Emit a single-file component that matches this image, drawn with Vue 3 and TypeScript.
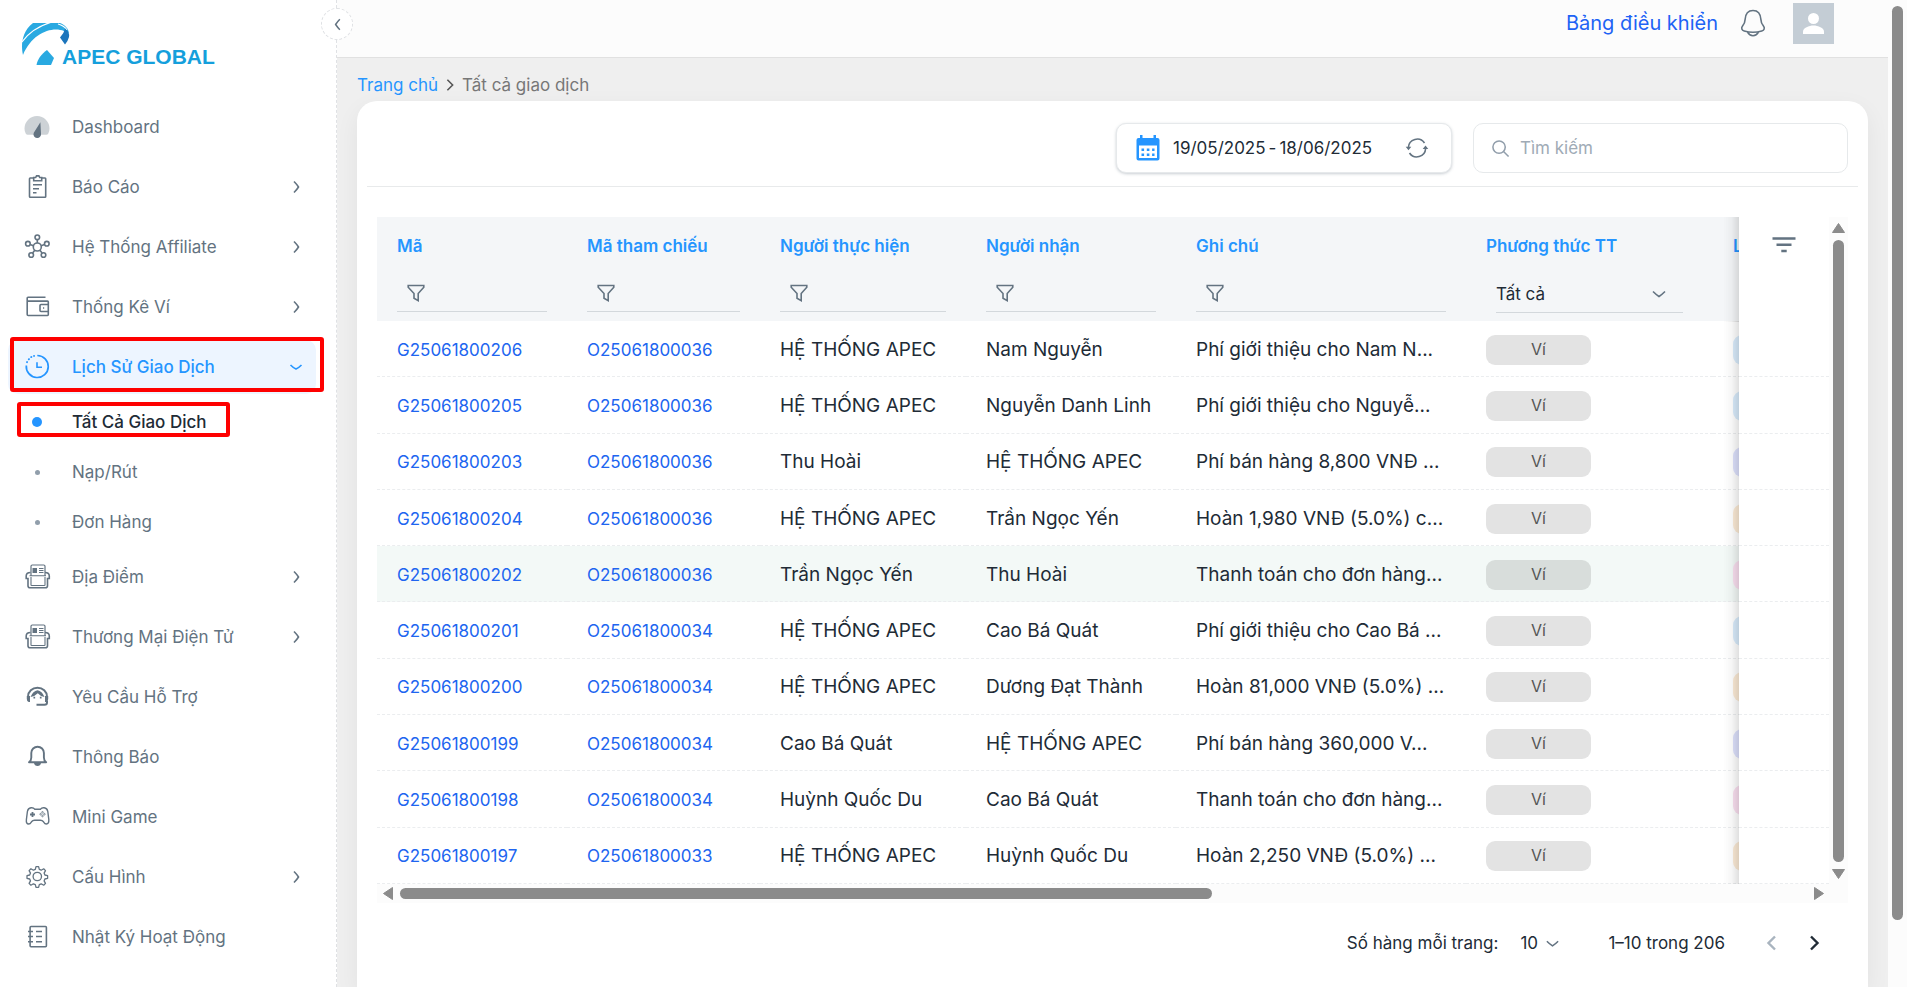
<script setup lang="ts">
import { ref } from 'vue'

interface SubItem {
  label: string
  active?: boolean
}

interface NavItem {
  label: string
  icon: string
  expandable?: boolean
  active?: boolean
  children?: SubItem[]
}

interface Row {
  code: string
  refCode: string
  from: string
  to: string
  note: string
  tone: 'blue' | 'violet' | 'orange' | 'pink'
}

const navItems: NavItem[] = [
  { label: 'Dashboard', icon: 'gauge' },
  { label: 'Báo Cáo', icon: 'clipboard', expandable: true },
  { label: 'Hệ Thống Affiliate', icon: 'hub', expandable: true },
  { label: 'Thống Kê Ví', icon: 'wallet', expandable: true },
  {
    label: 'Lịch Sử Giao Dịch',
    icon: 'history',
    expandable: true,
    active: true,
    children: [
      { label: 'Tất Cả Giao Dịch', active: true },
      { label: 'Nạp/Rút' },
      { label: 'Đơn Hàng' },
    ],
  },
  { label: 'Địa Điểm', icon: 'kiosk', expandable: true },
  { label: 'Thương Mại Điện Tử', icon: 'kiosk', expandable: true },
  { label: 'Yêu Cầu Hỗ Trợ', icon: 'support' },
  { label: 'Thông Báo', icon: 'bell' },
  { label: 'Mini Game', icon: 'gamepad' },
  { label: 'Cấu Hình', icon: 'gear', expandable: true },
  { label: 'Nhật Ký Hoạt Động', icon: 'notebook' },
]

const filterColumns = ['Mã', 'Mã tham chiếu', 'Người thực hiện', 'Người nhận', 'Ghi chú']

const rows: Row[] = [
  { code: 'G25061800206', refCode: 'O25061800036', from: 'HỆ THỐNG APEC', to: 'Nam Nguyễn', note: 'Phí giới thiệu cho Nam N...', tone: 'blue' },
  { code: 'G25061800205', refCode: 'O25061800036', from: 'HỆ THỐNG APEC', to: 'Nguyễn Danh Linh', note: 'Phí giới thiệu cho Nguyễ...', tone: 'blue' },
  { code: 'G25061800203', refCode: 'O25061800036', from: 'Thu Hoài', to: 'HỆ THỐNG APEC', note: 'Phí bán hàng 8,800 VNĐ ...', tone: 'violet' },
  { code: 'G25061800204', refCode: 'O25061800036', from: 'HỆ THỐNG APEC', to: 'Trần Ngọc Yến', note: 'Hoàn 1,980 VNĐ (5.0%) c...', tone: 'orange' },
  { code: 'G25061800202', refCode: 'O25061800036', from: 'Trần Ngọc Yến', to: 'Thu Hoài', note: 'Thanh toán cho đơn hàng...', tone: 'pink' },
  { code: 'G25061800201', refCode: 'O25061800034', from: 'HỆ THỐNG APEC', to: 'Cao Bá Quát', note: 'Phí giới thiệu cho Cao Bá ...', tone: 'blue' },
  { code: 'G25061800200', refCode: 'O25061800034', from: 'HỆ THỐNG APEC', to: 'Dương Đạt Thành', note: 'Hoàn 81,000 VNĐ (5.0%) ...', tone: 'orange' },
  { code: 'G25061800199', refCode: 'O25061800034', from: 'Cao Bá Quát', to: 'HỆ THỐNG APEC', note: 'Phí bán hàng 360,000 V...', tone: 'violet' },
  { code: 'G25061800198', refCode: 'O25061800034', from: 'Huỳnh Quốc Du', to: 'Cao Bá Quát', note: 'Thanh toán cho đơn hàng...', tone: 'pink' },
  { code: 'G25061800197', refCode: 'O25061800033', from: 'HỆ THỐNG APEC', to: 'Huỳnh Quốc Du', note: 'Hoàn 2,250 VNĐ (5.0%) ...', tone: 'orange' },
]

const highlighted = ref('G25061800202')
const search = ref('')
const method = ref('all')
const pageSize = ref('10')
</script>

<template>
  <div class="layout">
    <aside class="sidebar">
      <a class="logo" href="#">
        <svg class="logo-mark" viewBox="0 0 50 42" aria-hidden="true">
          <path d="M1 32C-1 24-1 9 11 0h27c5 2 8 5 9 10l-5-2C30 3 10 10 1 32z" fill="#29a9e1" />
          <path d="M0 19C7 9 16 3 30-1M36 1C40 2 43 4 45 7" stroke="#fff" stroke-width="1.200" fill="none" />
          <path d="M43 5.500q5 4 4 8.500-1 4-4 7.500l-5-7q4-4 5-9z" fill="#1c75bc" />
          <path d="M25 27l7 8-3 7H14.500c1-6 5-11 10.500-15z" fill="#29a9e1" />
        </svg>
        <span class="logo-text">APEC GLOBAL</span>
      </a>

      <nav class="nav" aria-label="Menu">
        <div v-for="item in navItems" :key="item.label" class="nav-group">
          <component
            :is="item.expandable ? 'button' : 'a'"
            class="nav-item"
            :class="{ active: item.active }"
            :type="item.expandable ? 'button' : undefined"
            :href="item.expandable ? undefined : '#'"
          >
            <svg class="nav-icon" viewBox="0 0 28 28" aria-hidden="true">
              <template v-if="item.icon === 'gauge'">
                <path d="M1.500 15.500a12.500 12.500 0 0 1 25 0q0 3-1.200 5-.7 1.300-2 1.300H4.700q-1.300 0-2-1.300-1.200-2-1.200-5z" fill="currentColor" stroke="none" opacity=".32" />
                <path d="M17.400 9.200L18 20.500a3.800 3.800 0 1 1-7.200-.8z" fill="currentColor" stroke="none" />
              </template>
              <template v-else-if="item.icon === 'clipboard'">
                <path d="M10.500 5H7.200Q6.500 5 6.500 5.700V23.500q0 .8.700.8H22q.7 0 .7-.8V5.700q0-.7-.7-.7h-3.300" />
                <path d="M10.700 7.800V4.500h2l.8-1.600h2.400l.8 1.600h2v3.300z" />
                <path d="M10 11.700h9M10 15.700h6M10 19.700h3.500" />
              </template>
              <template v-else-if="item.icon === 'hub'">
                <circle cx="14.300" cy="14" r="4" />
                <circle cx="14.300" cy="4.300" r="2.300" />
                <circle cx="4.900" cy="10.700" r="2.300" />
                <circle cx="23.800" cy="10.700" r="2.300" />
                <circle cx="8.200" cy="22" r="2.300" />
                <circle cx="20.500" cy="22" r="2.300" />
                <path d="M14.300 6.800V10M7.200 11.600l3.200 1.100M21.500 11.600l-3.300 1.100M9.600 20l2.200-2.800M19.100 20l-2.200-2.800" />
              </template>
              <template v-else-if="item.icon === 'wallet'">
                <path d="M22.500 4.200H5q-.8 0-.8.800v16.500q0 1 1 1H24.500q.8 0 .8-.9V9q0-.9-.8-.9H4.500" />
                <path d="M25.300 11.500H18q-1 0-1 1v5q0 1 1 1h7.300M20 15h1.200" />
              </template>
              <template v-else-if="item.icon === 'history'">
                <path d="M14.300 2.500A11 11 0 1 1 3.300 12.500" stroke-width="1.700" />
                <path d="M4 9.200l.1-.2M5.800 6.300l.2-.2M8.200 4.100l.2-.1M11 2.900h.1" stroke-width="1.900" stroke-linecap="round" />
                <path d="M14 9.300v5h5" />
              </template>
              <template v-else-if="item.icon === 'kiosk'">
                <path d="M8 13V3.300Q8 2 9.300 2h11.400Q22 2 22 3.300V13" stroke-width="1.200" />
                <path d="M9.500 5h4.500v5H9.500z" fill="currentColor" stroke="none" />
                <path d="M16 5.500h4.500M16 7.500h4.500M16 9.500h4.500M6.500 12.800h16.500" stroke-width="1.100" />
                <path d="M7.500 9.500Q3.200 9.500 3.200 13v2.500h1.800v7.200q0 2 2 2h15.500q2 0 2-2v-7.200h1.800V13q0-3.500-4.300-3.500" />
                <path d="M8 14v8q0 .5.700.5h12.600q.7 0 .7-.5V14" stroke-width="1.100" />
              </template>
              <template v-else-if="item.icon === 'support'">
                <path d="M5 14.500v-.8a9.500 9 0 0 1 19 0v.8" stroke-width="2" />
                <path d="M3.800 13h3.200v6H5.700q-1.900-.5-1.900-3zM25.200 13h-3.200v6h1.300q1.900-.5 1.900-3z" fill="currentColor" stroke="none" />
                <path d="M7.500 14q2.500-6 7-6.700 4.500.7 7 6.700-4.500-1-6.700-3.800-2.500 2.800-7.300 3.800z" fill="currentColor" stroke="none" />
                <path d="M11.300 13.700v1.800M17.700 13.700v1.800" stroke-width="1.700" />
                <path d="M24 18v1.500q0 2.200-2.500 2.200H13.500" stroke-width="2" />
              </template>
              <template v-else-if="item.icon === 'bell'">
                <path d="M6 19.200q2.300-1.500 2.300-4.700v-4.500a6.300 6.300 0 0 1 12.600 0v4.500q0 3.200 2.300 4.700z" stroke-width="1.900" stroke-linejoin="round" />
                <path d="M11 20q.5 3 3.500 3t3.500-3z" fill="currentColor" stroke="none" />
              </template>
              <template v-else-if="item.icon === 'gamepad'">
                <path d="M8 4.800q2.500-.3 3.700 1.400h5.800q1.200-1.700 3.700-1.400 3 .3 3.600 3.700l1 8q.3 4.500-2.500 4.500-1.400 0-2.800-2.200-1.200-1.500-3-1.500h-6q-1.800 0-3 1.500-1.400 2.200-2.800 2.200-2.800 0-2.300-4.500l1-8Q5 5.100 8 4.800z" stroke-width="1.400" />
                <path d="M9.500 9v5M7 11.500h5" stroke-width="1.800" />
                <circle cx="19.500" cy="9.300" r=".8" stroke-width=".8" /><circle cx="19.500" cy="13" r=".8" stroke-width=".8" /><circle cx="17.600" cy="11.200" r=".8" stroke-width=".8" /><circle cx="21.400" cy="11.200" r=".8" stroke-width=".8" />
              </template>
              <template v-else-if="item.icon === 'gear'">
                <circle cx="14.300" cy="13.500" r="4.200" stroke-width="1.300" />
                <path d="M13 3.700h2.600l.7 2.700 1.900.8 2.500-1.400 1.800 1.800-1.400 2.500.8 1.900 2.700.7v2.600l-2.700.7-.8 1.900 1.400 2.500-1.800 1.800-2.500-1.400-1.900.8-.7 2.700H13l-.7-2.700-1.900-.8-2.500 1.400-1.800-1.800 1.400-2.500-.8-1.900-2.700-.7v-2.600l2.700-.7.8-1.900-1.400-2.500 1.800-1.800 2.500 1.400 1.900-.8z" stroke-width="1.300" stroke-linejoin="round" />
              </template>
              <template v-else>
                <path d="M8 3.500h14.500q.9 0 .9.900v18.400q0 .9-.9.900H8q-.9 0-.9-.9V4.400q0-.9.900-.9z" />
                <path d="M5 8.500h5M5 13.500h5M5 18.800h5M13 8.500h6M13 13.500h6M13 18.800h6" />
              </template>
            </svg>
            <span class="nav-label">{{ item.label }}</span>
            <svg v-if="item.expandable" class="nav-chevron" viewBox="0 0 16 16" aria-hidden="true">
              <path :d="item.children ? 'M2.500 6Q5.500 9 8 10Q10.500 9 13.500 6' : 'M6 2.500Q9 5.500 10.500 8Q9 10.500 6 13.500'" />
            </svg>
          </component>
          <span v-if="item.active" class="mark mark-parent" aria-hidden="true"></span>

          <ul v-if="item.children" class="sub">
            <li v-for="child in item.children" :key="child.label" class="sub-row">
              <a class="sub-item" :class="{ current: child.active }" href="#">
                <span class="dot-cell"><span class="dot"></span></span>
                <span>{{ child.label }}</span>
              </a>
              <span v-if="child.active" class="mark mark-child" aria-hidden="true"></span>
            </li>
          </ul>
        </div>
      </nav>

      <button class="collapse" type="button" aria-label="Thu gọn menu">
        <svg viewBox="0 0 16 16" aria-hidden="true"><path d="M10.500 2.500Q8 5 6 8Q8 11 10.500 13.500" /></svg>
      </button>
    </aside>

    <div class="main">
      <header class="topbar">
        <a class="topbar-link" href="#">Bảng điều khiển</a>
        <button class="icon-button" type="button" aria-label="Thông báo">
          <svg class="top-bell" viewBox="0 0 28 28" aria-hidden="true">
            <path d="M14 1.500c-5 0-7.600 4-7.900 9-.1 3-1 4.600-2.400 6.300-1.900 2.300-.9 4.500 1.500 5.200 5.500 1.500 12.100 1.500 17.600 0 2.400-.7 3.400-2.900 1.500-5.200-1.400-1.700-2.300-3.300-2.400-6.300-.3-5-2.900-9-7.900-9z" />
            <path d="M8.500 23.200q2 3.500 5.500 3.500t5.500-3.500" />
          </svg>
        </button>
        <button class="avatar" type="button" aria-label="Tài khoản">
          <svg viewBox="0 0 41 41" aria-hidden="true">
            <circle cx="20.500" cy="15.500" r="5.500" />
            <path d="M10 31v-2.500c0-3.500 6-6 10.500-6s10.500 2.500 10.500 6V31z" />
          </svg>
        </button>
      </header>

      <div class="breadcrumb">
        <a href="#">Trang chủ</a>
        <svg viewBox="0 0 16 16" aria-hidden="true"><path d="M5 2L11 8l-6 6" /></svg>
        <span>Tất cả giao dịch</span>
      </div>

      <section class="card">
        <div class="toolbar">
          <div class="date-range">
            <svg class="calendar" viewBox="0 0 24 26" aria-hidden="true">
              <path d="M4 0h2.500v3h11V0H20v3h1.500Q23.500 3 23.500 5v18.500q0 2-2 2h-19q-2 0-2-2V5q0-2 2-2H4z" fill="#2595ff" />
              <path d="M3 10.500h18V23H3z" fill="#fff" />
              <path d="M5.500 14.700h13M5.500 19.700h13" stroke="#2595ff" stroke-width="2.600" stroke-dasharray="2.600 2.700" />
            </svg>
            <button class="date-value" type="button"><span>19/05/2025</span><span>-</span><span>18/06/2025</span></button>
            <button class="icon-button" type="button" aria-label="Làm mới">
              <svg class="refresh" viewBox="0 0 24 24" aria-hidden="true">
                <path d="M3.400 11.500A8.800 8.800 0 0 1 19.500 7M20.600 12.500A8.800 8.800 0 0 1 4.500 17" />
                <path d="M.7 10.800h5.600l-2.800 3.400zM17.700 13h5.600l-2.800-3.400z" fill="#637381" stroke="none" />
              </svg>
            </button>
          </div>
          <label class="search">
            <svg viewBox="0 0 20 20" aria-hidden="true"><circle cx="8.500" cy="8.500" r="6.500" /><path d="M13.200 13.200L18.500 18.500" /></svg>
            <input v-model="search" type="text" placeholder="Tìm kiếm" aria-label="Tìm kiếm" />
          </label>
        </div>

        <div class="table-area">
          <div class="viewport">
            <table>
              <colgroup>
                <col class="c-code" /><col class="c-ref" /><col class="c-from" /><col class="c-to" /><col class="c-note" /><col class="c-method" /><col class="c-type" /><col class="c-action" />
              </colgroup>
              <thead>
                <tr>
                  <th v-for="name in filterColumns" :key="name" scope="col">
                    <div class="th-title">{{ name }}</div>
                    <div class="filter">
                      <button class="icon-button" type="button" :aria-label="'Lọc ' + name">
                        <svg viewBox="0 0 20 20" aria-hidden="true"><path d="M2.200 2.500h15.600v1.800l-5.600 6.200v7.200l-4.200-2.400v-4.800L2.200 4.300z" /></svg>
                      </button>
                      <input type="text" :aria-label="name" />
                    </div>
                  </th>
                  <th scope="col">
                    <div class="th-title">Phương thức TT</div>
                    <div class="select-field">
                      <select v-model="method" aria-label="Phương thức TT">
                        <option value="all">Tất cả</option>
                        <option value="wallet">Ví</option>
                      </select>
                      <svg viewBox="0 0 16 16" aria-hidden="true"><path d="M2 5.500Q5 8.500 8 10.500Q11 8.500 14 5.500" /></svg>
                    </div>
                  </th>
                  <th scope="col"><div class="th-title">Loại</div></th>
                  <th class="sticky" scope="col">
                    <button class="icon-button" type="button" aria-label="Bộ lọc">
                      <svg class="filter-lines" viewBox="0 0 24 18" aria-hidden="true"><path d="M.5 2.500h23M4.500 8.800h15M9.300 15h5.400" /></svg>
                    </button>
                  </th>
                </tr>
              </thead>
              <tbody>
                <tr v-for="row in rows" :key="row.code" :class="{ hovered: row.code === highlighted }">
                  <td><a class="code" href="#">{{ row.code }}</a></td>
                  <td><a class="code" href="#">{{ row.refCode }}</a></td>
                  <td>{{ row.from }}</td>
                  <td>{{ row.to }}</td>
                  <td>{{ row.note }}</td>
                  <td><span class="chip">Ví</span></td>
                  <td><span class="type-chip" :class="row.tone"></span></td>
                  <td class="sticky"></td>
                </tr>
              </tbody>
            </table>
          </div>
          <div class="vbar" aria-hidden="true">
            <svg viewBox="0 0 13 10"><path d="M6.500.5L12.500 9.500H.5z" /></svg>
            <span class="vthumb"></span>
            <svg viewBox="0 0 13 10"><path d="M6.500 9.500L12.500.5H.5z" /></svg>
          </div>
          <div class="hbar" aria-hidden="true">
            <svg viewBox="0 0 10 13"><path d="M.5 6.500L9.500.5v12z" /></svg>
            <span class="htrack"><span class="hthumb"></span></span>
            <svg viewBox="0 0 10 13"><path d="M9.500 6.500L.5.500v12z" /></svg>
          </div>
        </div>

        <footer class="pager">
          <label for="page-size">Số hàng mỗi trang:</label>
          <div class="page-size">
            <select id="page-size" v-model="pageSize">
              <option>10</option>
              <option>25</option>
            </select>
            <svg viewBox="0 0 16 16" aria-hidden="true"><path d="M2 5.500Q5 8.500 8 10.500Q11 8.500 14 5.500" /></svg>
          </div>
          <span class="range">1–10 trong 206</span>
          <button class="page-button" type="button" disabled aria-label="Trang trước">
            <svg viewBox="0 0 20 20" aria-hidden="true"><path d="M13 3.500L6.500 10l6.500 6.500" /></svg>
          </button>
          <button class="page-button" type="button" aria-label="Trang sau">
            <svg viewBox="0 0 20 20" aria-hidden="true"><path d="M7 3.500l6.500 6.500L7 16.500" /></svg>
          </button>
        </footer>
      </section>
    </div>

    <div class="page-bar" aria-hidden="true"><span class="page-thumb"></span></div>
  </div>
</template>

<style>
body {
  margin: 0;
  background: #efefef;
}
</style>

<style scoped>
.layout {
  display: flex;
  height: 100vh;
  overflow: hidden;
  font-family: Inter, 'Liberation Sans', sans-serif;
  font-size: 17px;
  line-height: 26px;
  color: #212b36;
}

.layout *,
.layout *::before {
  box-sizing: border-box;
}

button,
input,
select {
  font: inherit;
  color: inherit;
  background: none;
  border: 0;
  padding: 0;
  margin: 0;
  outline: 0;
}

a {
  color: inherit;
  text-decoration: none;
}

svg {
  display: block;
  flex: none;
  fill: none;
  stroke: currentColor;
  stroke-width: 1.6;
}

.icon-button {
  display: flex;
  color: #637381;
}

/* Sidebar */
.sidebar {
  position: relative;
  z-index: 2;
  flex: none;
  width: 337px;
  background: #fff;
  border-right: 1px dashed #dfe1e4;
}

.logo {
  display: flex;
  align-items: flex-end;
  height: 97px;
  padding: 0 0 32px 22px;
}

.logo-mark {
  width: 50px;
  height: 42px;
  stroke: none;
  margin-right: -10px;
}

.logo-text {
  font: bold 21px/16px 'Liberation Sans', sans-serif;
  color: #159fdc;
  white-space: nowrap;
}

.nav {
  padding: 0 20px 0 8px;
}

.nav-group {
  position: relative;
  padding-top: 3px;
}

.nav-item {
  display: flex;
  align-items: center;
  width: 100%;
  height: 54px;
  margin-bottom: 3px;
  padding: 0 12px 0 15px;
  border-radius: 10px;
  color: #637381;
  text-align: left;
}

.nav-item.active {
  background: #edf5ff;
  color: #2595ff;
  font-weight: 500;
}

.nav-icon {
  width: 28px;
  height: 28px;
  margin-right: 21px;
}

.nav-label {
  flex: 1;
}

.nav-chevron {
  width: 16px;
  height: 16px;
}

.sub {
  list-style: none;
  margin: 0;
  padding: 0;
}

.sub-row {
  position: relative;
}

.sub-item {
  display: flex;
  align-items: center;
  height: 50px;
  padding-left: 15px;
  color: #637381;
}

.sub-item.current {
  color: #212b36;
  font-weight: 500;
}

.dot-cell {
  display: flex;
  justify-content: center;
  width: 28px;
  margin-right: 21px;
}

.dot {
  width: 5px;
  height: 5px;
  border-radius: 50%;
  background: #919eab;
}

.current .dot {
  width: 10px;
  height: 10px;
  background: #2595ff;
}

.mark {
  position: absolute;
  border: 4px solid #fe0000;
  border-radius: 3px;
  pointer-events: none;
}

.mark-parent {
  left: 2px;
  right: -8px;
  top: 0;
  height: 55px;
}

.mark-child {
  left: 9px;
  top: 5px;
  width: 213px;
  height: 35px;
}

.collapse {
  position: absolute;
  top: 8px;
  right: -17px;
  display: flex;
  align-items: center;
  justify-content: center;
  width: 32px;
  height: 32px;
  border: 1px dashed #dfe1e4;
  border-radius: 50%;
  background: #fff;
  color: #637381;
}

.collapse svg {
  width: 15px;
  height: 15px;
}

/* Top bar */
.main {
  flex: 1;
  min-width: 0;
  display: flex;
  flex-direction: column;
}

.topbar {
  flex: none;
  display: flex;
  align-items: center;
  justify-content: flex-end;
  height: 58px;
  padding: 0 54px 11px 0;
  background: #fcfcfc;
  border-bottom: 1px solid #e1e1e1;
}

.topbar-link {
  font-size: 20px;
  color: #1e63f5;
  margin-right: 21px;
}

.top-bell {
  width: 28px;
  height: 28px;
}

.avatar {
  width: 41px;
  height: 41px;
  margin-left: 26px;
  background: #c4cdd5;
}

.avatar svg {
  width: 41px;
  height: 41px;
  fill: #fff;
  stroke: none;
}

.breadcrumb {
  display: flex;
  align-items: center;
  gap: 5px;
  padding: 14px 20px 3px;
  color: #777;
}

.breadcrumb a {
  color: #2595ff;
}

.breadcrumb svg {
  width: 14px;
  height: 14px;
  stroke: #555;
  stroke-width: 1.8;
}

/* Card */
.card {
  flex: 1 0 auto;
  margin: 0 20px;
  border-radius: 20px 20px 0 0;
  background: #fff;
  box-shadow: 0 8px 24px rgba(0, 0, 0, 0.06);
}

.toolbar {
  display: flex;
  justify-content: flex-end;
  gap: 21px;
  margin: 0 10px;
  padding: 22px 10px 13px;
  border-bottom: 1px solid #e8eaeb;
}

.date-range,
.search {
  display: flex;
  align-items: center;
  height: 50px;
  border: 1px solid #e6e9eb;
  border-radius: 10px;
  background: #fff;
}

.date-range {
  padding: 0 22px 0 19px;
  box-shadow: 0 1px 3px rgba(99, 115, 129, 0.35);
}

.calendar {
  width: 24px;
  height: 26px;
  stroke: none;
}

.date-value {
  display: flex;
  gap: 3px;
  width: 202px;
  margin: 0 30px 0 13px;
  white-space: nowrap;
}

.refresh {
  width: 24px;
  height: 24px;
}

.search {
  width: 375px;
  padding: 0 17px;
  gap: 10px;
  color: #919eab;
}

.search svg {
  width: 19px;
  height: 19px;
}

.search input {
  flex: 1;
  min-width: 0;
  color: #212b36;
}

.search input::placeholder {
  color: #a0abb6;
  opacity: 1;
}

/* Table */
.table-area {
  display: grid;
  grid-template-columns: minmax(0, 1fr) 19px;
  margin: 30px 20px 0;
}

.viewport {
  overflow: hidden;
}

table {
  table-layout: fixed;
  width: 2520px;
  height: 667px;
  border-collapse: separate;
  border-spacing: 0;
}

.c-code { width: 190px; }
.c-ref { width: 193px; }
.c-from { width: 206px; }
.c-to { width: 210px; }
.c-note { width: 290px; }
.c-method { width: 247px; }
.c-action { width: 90px; }

th {
  height: 103px;
  padding: 16px 20px 8px;
  vertical-align: top;
  text-align: left;
  font-weight: 400;
  background: #f4f6f8;
}

.th-title {
  font-weight: 600;
  color: #2595ff;
  margin-bottom: 16px;
  white-space: nowrap;
}

.filter {
  display: flex;
  align-items: center;
  height: 37px;
  padding-left: 9px;
  border-bottom: 1px solid #d3d8dc;
}

.filter svg {
  width: 20px;
  height: 20px;
}

.filter input {
  flex: 1;
  min-width: 0;
  height: 36px;
}

.select-field {
  display: flex;
  align-items: center;
  position: relative;
  height: 38px;
  margin: 0 10px;
  border-bottom: 1px solid #d3d8dc;
}

.select-field select {
  width: 100%;
  height: 37px;
  appearance: none;
}

.select-field svg {
  position: absolute;
  right: 16px;
  width: 16px;
  height: 16px;
  color: #637381;
  pointer-events: none;
}

td {
  padding: 2px 20px 0;
  border-bottom: 1px dashed #ebedef;
  font-size: 19px;
  white-space: nowrap;
  background: #fff;
}

tr.hovered td:not(.sticky) {
  background: #f3f9f7;
}

.code {
  font-size: 17px;
  color: #2065f0;
}

.chip {
  display: block;
  width: 105px;
  height: 30px;
  border-radius: 9px;
  background: rgba(0, 0, 0, 0.11);
  font-size: 16px;
  line-height: 29px;
  text-align: center;
  color: #555;
}

.type-chip {
  display: block;
  width: 160px;
  height: 30px;
  border-radius: 9px;
}

.blue { background: #d9ecfc; }
.violet { background: #dde1fc; }
.orange { background: #fcebd6; }
.pink { background: #fadff0; }

.sticky {
  position: sticky;
  right: 0;
  background: #fff;
}

.sticky::before {
  content: '';
  position: absolute;
  top: 0;
  bottom: -1px;
  right: 100%;
  width: 16px;
  background: linear-gradient(to left, rgba(0, 0, 0, 0.12), rgba(0, 0, 0, 0.03) 50%, transparent);
}

th.sticky .icon-button {
  margin: 3px 0 0 13px;
}

.filter-lines {
  width: 24px;
  height: 18px;
  stroke-width: 2.4;
}

/* Scroll bars */
.vbar,
.hbar,
.page-bar {
  display: flex;
  background: #fcfcfc;
}

.vbar svg,
.hbar svg {
  fill: #8b8b8b;
  stroke: #8b8b8b;
  stroke-width: 1;
  stroke-linejoin: round;
}

.vbar {
  flex-direction: column;
  align-items: center;
  gap: 7px;
  padding: 6px 0 5px;
}

.vbar svg {
  width: 13px;
  height: 10px;
}

.vthumb {
  flex: 1;
  width: 11px;
  border-radius: 6px;
  background: #8b8b8b;
}

.hbar {
  grid-column: 1 / -1;
  align-items: center;
  gap: 7px;
  height: 19px;
  padding: 0 24px 0 6px;
}

.hbar svg {
  width: 10px;
  height: 13px;
}

.htrack {
  flex: 1;
}

.hthumb {
  display: block;
  width: 57.7%;
  height: 11px;
  border-radius: 6px;
  background: #8b8b8b;
}

.page-bar {
  flex: none;
  width: 19px;
  padding: 6px 4px;
}

.page-thumb {
  width: 11px;
  height: 93.7%;
  border-radius: 6px;
  background: #8b8b8b;
}

/* Pager */
.pager {
  display: flex;
  align-items: center;
  justify-content: flex-end;
  height: 80px;
  padding-right: 44px;
}

.page-size {
  position: relative;
  display: flex;
  align-items: center;
  margin: 0 48px 0 22px;
}

.page-size select {
  width: 40px;
  appearance: none;
}

.page-size svg {
  position: absolute;
  right: 0;
  width: 15px;
  height: 15px;
  color: #637381;
  pointer-events: none;
}

.range {
  margin-right: 37px;
}

.page-button {
  display: flex;
}

.page-button + .page-button {
  margin-left: 22px;
}

.page-button svg {
  width: 20px;
  height: 20px;
  stroke-width: 2.4;
}

.page-button:disabled {
  color: #a9b4bf;
}
</style>
